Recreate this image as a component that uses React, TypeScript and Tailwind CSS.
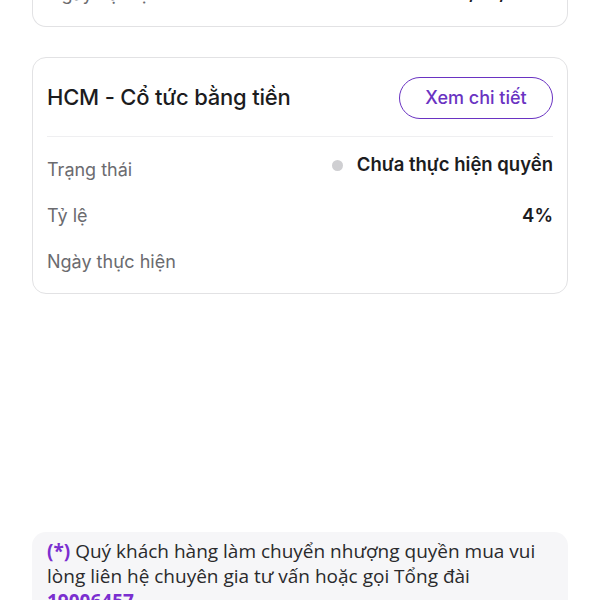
import React from 'react';

const rows = [
  { label: 'Trạng thái', value: 'Chưa thực hiện quyền', status: true },
  { label: 'Tỷ lệ', value: '4%' },
  { label: 'Ngày thực hiện', value: '' },
];

export default function App() {
  return (
    <div className="w-[600px] h-[600px] overflow-hidden bg-white font-['Inter',sans-serif] text-[#1c1c1e]">
      <div className="-mt-[27px] px-8 flex flex-col">
        {/* previous card, scrolled out of view */}
        <div className="h-[54px] rounded-b-[14px] border border-t-0 border-[#e2e2e4] px-[15px] flex items-start justify-between">
          <span className="text-[18px] leading-[30px] pt-[6px] text-[#6b6b6f]">Ngày đại hội</span>
          <span className="text-[18px] leading-[30px] pt-[6px] font-semibold">17/06/2025</span>
        </div>

        <div className="mt-[30px] rounded-[14px] border border-[#e2e2e4] px-[14px] pb-[13px]">
          <div className="flex items-center justify-between h-[79px] border-b border-[#efeff1] pt-[1px]">
            <h2 className="text-[22px] font-medium tracking-[-0.2px]">HCM - Cổ tức bằng tiền</h2>
            <button className="h-[42px] w-[154px] rounded-full border-[1.5px] border-[#6a33c2] text-[18px] font-medium text-[#6a33c2]">
              Xem chi tiết
            </button>
          </div>
          <div className="flex flex-col pt-[5px]">
            {rows.map((r) => (
              <div key={r.label} className="flex items-center justify-between h-[46px]">
                <span className="text-[18px] text-[#6b6b6f] pt-[9px]">{r.label}</span>
                {r.status ? (
                  <span className="flex items-center gap-[14px] text-[18.5px] font-semibold">
                    <span className="w-[11px] h-[11px] rounded-full bg-[#cfcfd2]" />
                    {r.value}
                  </span>
                ) : (
                  <span className="text-[18.5px] font-semibold pt-[9px]">{r.value}</span>
                )}
              </div>
            ))}
          </div>
        </div>

        <div className="mt-[238px] rounded-[14px] bg-[#f6f6f8] px-[15px] pt-[7px] pb-4 font-['Open_Sans',sans-serif] text-[19px] leading-[25px] text-[#2a2a2c]">
          <span className="font-bold text-[#7b2fd0]">(*)</span> Quý khách hàng làm chuyển nhượng quyền mua vui lòng liên hệ chuyên gia tư vấn hoặc gọi Tổng đài{' '}
          <span className="font-bold text-[#7b2fd0]">19006457</span>
        </div>
      </div>
    </div>
  );
}
